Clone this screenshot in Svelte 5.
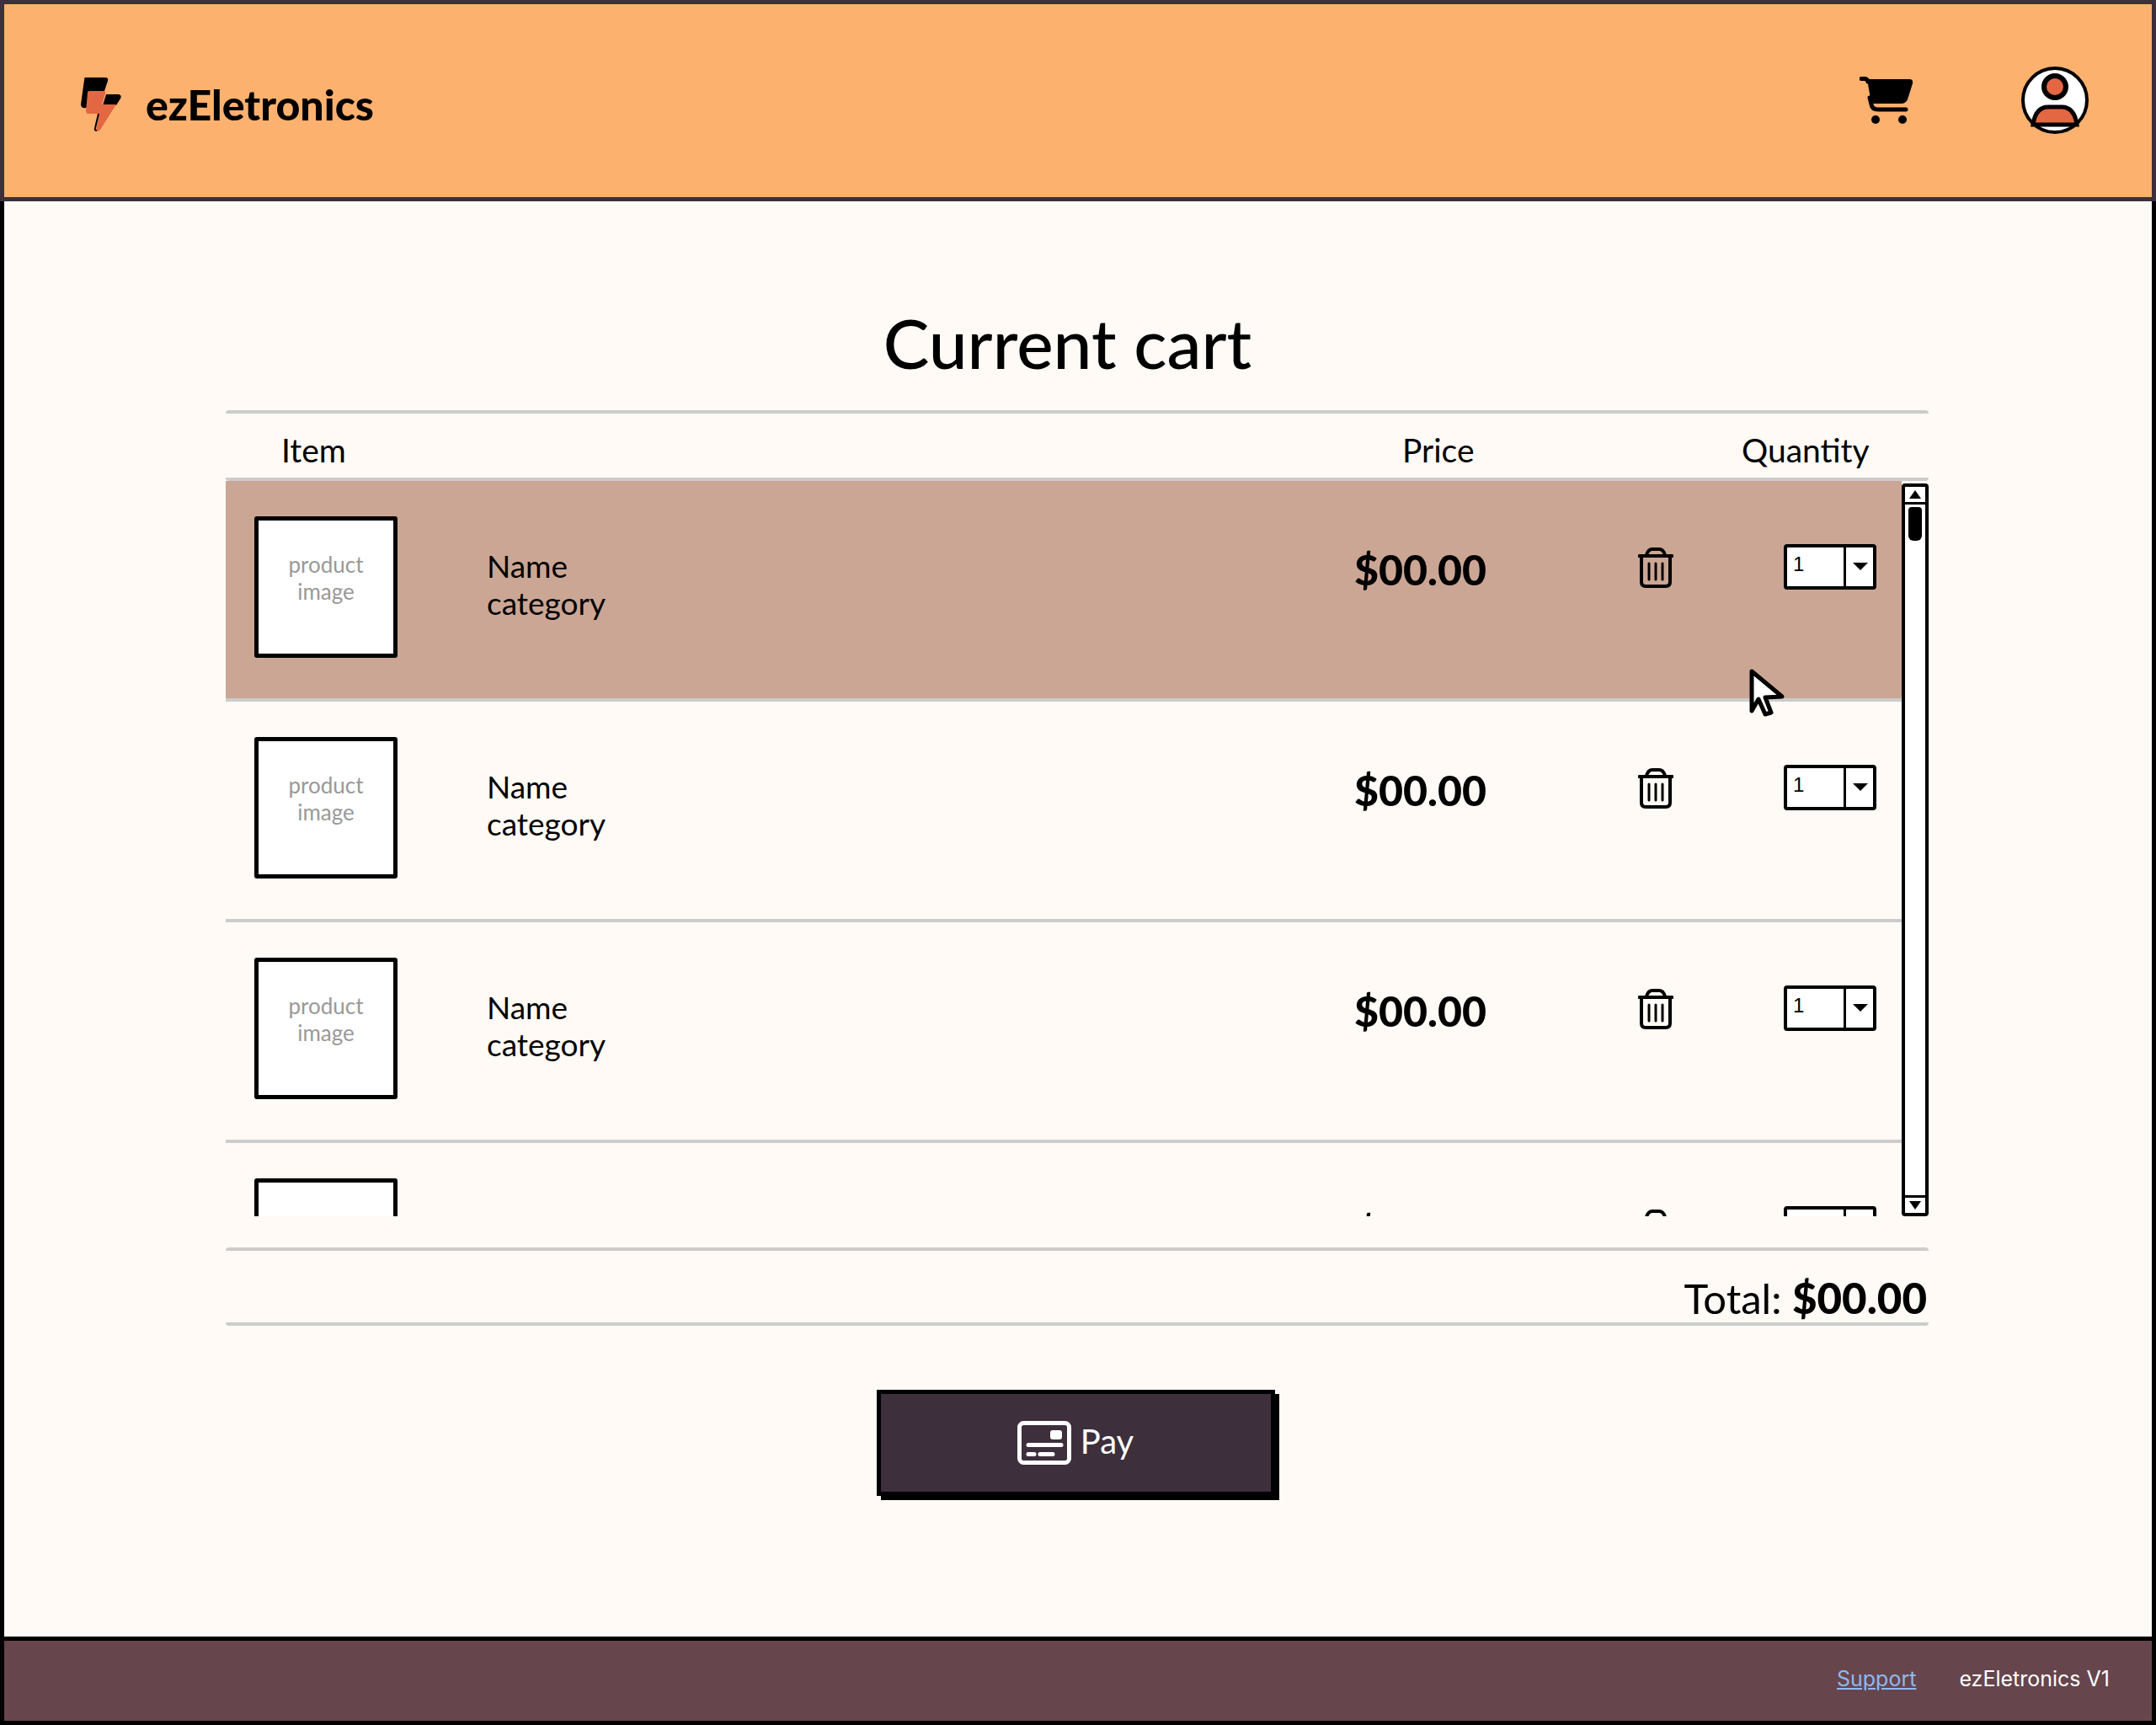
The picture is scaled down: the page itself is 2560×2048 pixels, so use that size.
<script>
  let items = [1, 2, 3, 4];
</script>

<div class="app">
  <header class="topbar">
    <div class="brand">
      <svg class="logo" viewBox="95 90 50 68" width="50" height="68">
        <path d="M101 92 H125 Q129 92 128 96 L124 108 H106 L103 127 Q102 129 99 128 Q96 127 96 124 L100 95 Q100 92 101 92 Z" fill="#000" />
        <path d="M126 112 H141 Q145 113 143 117 L138 125 H122 Z" fill="#000" />
        <path d="M106 108 H123 Q126 108 125 111 L121 124 H138 L119 154 Q117 157 114 155 L118 135 H105 Q102 135 102 132 L104 110 Q104 108 106 108 Z" fill="#e26742" />
        <path d="M117 135 L113 152 Q112 155 115 155" fill="none" stroke="#000" stroke-width="2" />
      </svg>
      <span class="brand-name">ezEletronics</span>
    </div>
    <div class="top-actions">
      <svg class="cart" viewBox="0 0 64 56" width="64" height="56">
        <path d="M2 2.5 H6 Q9 2.5 10 6" fill="none" stroke="#000" stroke-width="5" stroke-linecap="round" />
        <path d="M9 3 H59 Q64 3 63 8 L58 24 Q56 32 50 32 H14 Z" fill="#000" />
        <path d="M12 25 L14 33 Q15 39 22 39 H55" fill="none" stroke="#000" stroke-width="5" stroke-linecap="round" />
        <circle cx="19" cy="51" r="5" fill="#000" />
        <circle cx="51" cy="51" r="5" fill="#000" />
      </svg>
      <svg class="user" viewBox="0 0 80 80" width="80" height="80">
        <circle cx="40" cy="40" r="38" fill="#fff" stroke="#000" stroke-width="4" />
        <circle cx="40" cy="24" r="13" fill="#e26742" stroke="#000" stroke-width="6" />
        <path d="M14 69 Q17 48 32 48 H48 Q63 48 66 69 Z" fill="#e26742" stroke="#000" stroke-width="5" />
      </svg>
    </div>
  </header>

  <main class="content">
    <h1 class="title">Current cart</h1>

    <section class="cart-table">
      <div class="table-head">
        <span class="head-item">Item</span>
        <span class="head-price">Price</span>
        <span class="head-qty">Quantity</span>
      </div>

      <div class="scroll-area">
        <div class="rows">
          {#each items as item, i}
            <div class="row {i === 0 ? 'row-active' : ''}">
              <div class="product-image">product<br />image</div>
              <div class="product-info">Name<br />category</div>
              <div class="price">$00.00</div>
              <svg class="trash" viewBox="0 0 42 48" width="42" height="48">
                <path d="M1.5 10 H40.5" stroke="#000" stroke-width="4" stroke-linecap="round" />
                <path d="M10 9 Q12 2 17 2 H25 Q30 2 32 9" fill="none" stroke="#000" stroke-width="4" />
                <path d="M4 10 V41 Q4 46 9 46 H33 Q38 46 38 41 V10" fill="none" stroke="#000" stroke-width="4" />
                <path d="M13 19 V38 M21 19 V38 M29 19 V38" stroke="#000" stroke-width="3" stroke-linecap="round" />
              </svg>
              <div class="qty-select">
                <span class="qty-value">1</span>
                <span class="qty-arrow"></span>
              </div>
            </div>
          {/each}
        </div>
        <div class="scrollbar">
          <div class="scroll-cap"><span class="tri-up"></span></div>
          <div class="scroll-track"><div class="scroll-thumb"></div></div>
          <div class="scroll-cap scroll-cap-down"><span class="tri-down"></span></div>
        </div>
      </div>

      <div class="total">Total:&nbsp;<strong>$00.00</strong></div>
    </section>

    <button class="pay-btn">
      <svg viewBox="0 0 64 52" width="64" height="52">
        <rect x="2.5" y="2.5" width="59" height="47" rx="5" fill="none" stroke="#fff" stroke-width="5" />
        <rect x="39" y="11" width="14" height="11" rx="3" fill="#fff" />
        <path d="M13 28.5 H52 M13 39.5 H20 M27 39.5 H42" stroke="#fff" stroke-width="5" stroke-linecap="round" />
      </svg>
      <span class="pay-label">Pay</span>
    </button>
  </main>

  <footer class="footer">
    <a class="support" href="#support">Support</a>
    <span>ezEletronics V1</span>
  </footer>

  <svg class="pointer" viewBox="0 0 44 58" width="44" height="58">
    <path d="M3 3 L39 33 L19 34 L26 52 L19 54 L11 36 L3 50 Z" fill="#fff" stroke="#000" stroke-width="5" stroke-linejoin="round" />
  </svg>
</div>

<style>
  :global(body) {
    margin: 0;
    background: #fffaf5;
  }
  .app {
    position: relative;
    width: 2560px;
    height: 2048px;
    display: flex;
    flex-direction: column;
    font-family: "Lato", "Open Sans", sans-serif;
    color: #000;
    overflow: hidden;
  }
  .topbar {
    box-sizing: border-box;
    height: 239px;
    flex: none;
    display: flex;
    align-items: center;
    justify-content: space-between;
    background: #fdb16f;
    border: 5px solid #3d2f3b;
    padding: 0 75px 0 90px;
  }
  .brand {
    display: flex;
    align-items: center;
    gap: 28px;
  }
  .logo {
    margin-top: 8px;
  }
  .brand-name {
    font-size: 50px;
    font-weight: 900;
    margin-top: 8px;
  }
  .top-actions {
    display: flex;
    align-items: center;
    gap: 128px;
    margin-bottom: 1px;
  }
  .content {
    flex: 1;
    box-sizing: border-box;
    display: flex;
    flex-direction: column;
    align-items: center;
    background: #fffaf5;
    border-left: 5px solid #000;
    border-right: 5px solid #000;
  }
  .title {
    margin: 121px 25px 0 0;
    height: 127px;
    font-size: 82px;
    line-height: 92px;
    font-weight: 500;
  }
  .cart-table {
    width: 2022px;
    margin-right: 2px;
  }
  .table-head {
    box-sizing: border-box;
    height: 84px;
    padding-top: 10px;
    display: flex;
    align-items: center;
    font-size: 39px;
    border-top: 4px solid #ccc;
    border-bottom: 4px solid #ccc;
    border-radius: 4px;
  }
  .head-item {
    margin-left: 66px;
    width: 1331px;
  }
  .head-price {
    width: 403px;
  }
  .scroll-area {
    display: flex;
    height: 873px;
    overflow: hidden;
  }
  .rows {
    flex: 1;
  }
  .row {
    box-sizing: border-box;
    height: 262px;
    display: flex;
    align-items: flex-start;
    padding: 42px 0 0 34px;
    border-bottom: 4px solid #ccc;
  }
  .row-active {
    background: #cba694;
  }
  .product-image {
    box-sizing: border-box;
    width: 170px;
    height: 168px;
    flex: none;
    padding-top: 36px;
    background: #fff;
    border: 5px solid #000;
    border-radius: 3px;
    color: #999;
    font-size: 26px;
    line-height: 32px;
    text-align: center;
  }
  .product-info {
    width: 1028px;
    margin: 37px 0 0 106px;
    font-size: 37px;
    line-height: 44px;
  }
  .price {
    width: 337px;
    margin-top: 35px;
    margin-left: 2px;
    font-size: 50px;
    line-height: 56px;
    font-weight: 900;
  }
  .trash {
    flex: none;
    margin-top: 37px;
  }
  .qty-select {
    box-sizing: border-box;
    width: 110px;
    height: 54px;
    margin: 33px 0 0 131px;
    display: flex;
    background: #fff;
    border: 4px solid #000;
    border-radius: 4px;
  }
  .qty-value {
    width: 70px;
    padding-left: 7px;
    box-sizing: border-box;
    font-family: "Liberation Sans", sans-serif;
    font-size: 24px;
    line-height: 40px;
    border-right: 3px solid #000;
  }
  .qty-arrow {
    width: 0;
    height: 0;
    margin: 18px 0 0 8px;
    border-left: 9px solid transparent;
    border-right: 9px solid transparent;
    border-top: 9px solid #000;
  }
  .scrollbar {
    box-sizing: border-box;
    width: 32px;
    margin-top: 3px;
    flex: none;
    display: flex;
    flex-direction: column;
    background: #fff;
    border: 4px solid #000;
    border-radius: 4px;
  }
  .scroll-cap {
    height: 18px;
    flex: none;
    display: flex;
    align-items: center;
    justify-content: center;
    border-bottom: 3px solid #000;
  }
  .scroll-cap-down {
    border-bottom: none;
    border-top: 3px solid #000;
  }
  .tri-up,
  .tri-down {
    width: 0;
    height: 0;
    border-left: 7px solid transparent;
    border-right: 7px solid transparent;
  }
  .tri-up {
    border-bottom: 10px solid #000;
  }
  .tri-down {
    border-top: 10px solid #000;
  }
  .scroll-track {
    flex: 1;
    padding: 3px 4px;
  }
  .scroll-thumb {
    height: 40px;
    background: #000;
    border-radius: 4px 4px 6px 6px;
  }
  .total {
    box-sizing: border-box;
    height: 93px;
    margin-top: 37px;
    padding: 26px 2px 0 0;
    display: flex;
    align-items: center;
    justify-content: flex-end;
    font-size: 49px;
    border-top: 4px solid #ccc;
    border-bottom: 4px solid #ccc;
    border-radius: 4px;
  }
  .total strong {
    font-size: 51px;
    font-weight: 900;
  }
  .pay-btn {
    box-sizing: border-box;
    width: 473px;
    height: 126px;
    margin: 76px 6px 0 0;
    display: flex;
    align-items: center;
    justify-content: center;
    gap: 11px;
    color: #fff;
    background: #3d2f3b;
    border: 5px solid #000;
    box-shadow: 5px 5px 0 #000;
    font-family: inherit;
    font-size: 40px;
  }
  .pay-label {
    margin-bottom: 4px;
  }
  .footer {
    box-sizing: border-box;
    height: 105px;
    flex: none;
    display: flex;
    align-items: center;
    justify-content: flex-end;
    gap: 51px;
    padding: 0 50px 6px 0;
    background: #67454c;
    border: 5px solid #000;
    color: #fff;
    font-family: "Inter", sans-serif;
    font-size: 25px;
  }
  .support {
    color: #8fb8ee;
  }
  .pointer {
    position: absolute;
    left: 2077px;
    top: 794px;
  }
</style>
